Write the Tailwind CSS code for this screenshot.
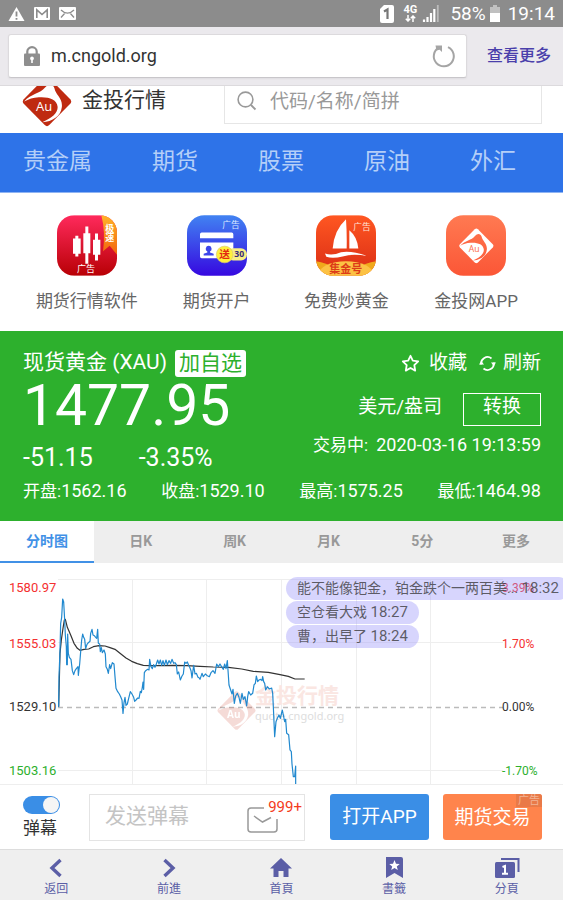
<!DOCTYPE html>
<html lang="zh-CN">
<head>
<meta charset="utf-8">
<meta name="viewport" content="width=device-width, initial-scale=1">
<title>金投行情</title>
<script src="https://cdn.jsdelivr.net/npm/@tailwindcss/browser@4"></script>
</head>
<body class="bg-white font-[Roboto,'Noto_Sans_CJK_SC',sans-serif] text-[#333] overflow-x-hidden">

<svg class="absolute h-0 w-0" aria-hidden="true">
  <defs>
    <mask id="cut" maskUnits="userSpaceOnUse" x="60" y="220" width="162" height="166">
      <rect x="60" y="220" width="162" height="166" fill="#fff"/>
      <path fill="#000" d="M70 303C92 278 120 280 135 260C145 247 160 248 164 262C168 283 190 292 187 320C184 348 158 366 126 367C158 354 174 338 174 320C172 296 146 288 116 290C98 291 84 296 70 303Z"/>
    </mask>
    <symbol id="diamond" viewBox="64 224 154 158">
      <path mask="url(#cut)" fill="currentColor" d="M134 230Q141 223 148 230L213 296Q219 303 213 310L148 376Q141 383 134 376L69 310Q63 303 69 296Z"/>
    </symbol>
  </defs>
</svg>

<!-- System status -->
<div class="flex h-[27px] items-center justify-between bg-[#8c8c8c] px-2 text-white">
  <div class="flex items-center gap-2">
    <svg class="h-4 w-[17px]" viewBox="0 0 17 16"><path fill="#fff" d="M8.500 1L16.500 15H.5Z"/><path stroke="#8c8c8c" stroke-width="1.800" d="M8.500 5.500v5M8.500 12v1.800"/></svg>
    <svg class="ml-px h-[13px] w-4" viewBox="0 0 16 13"><rect width="16" height="13" rx="1" fill="#fff"/><path fill="none" stroke="#8c8c8c" stroke-width="1.600" d="M2.800 11V2.800L8 7.500L13.200 2.800V11"/></svg>
    <svg class="ml-px h-[13px] w-[17px]" viewBox="0 0 17 13"><rect width="17" height="13" rx="1" fill="#fff"/><path fill="none" stroke="#8c8c8c" stroke-width="1.300" d="M2 3C6 7 11 7 15 3M2 10.500L6 6M15 10.500L11 6"/></svg>
  </div>
  <div class="flex items-center text-[19px] leading-none">
    <svg class="h-[18px] w-[14px]" viewBox="0 0 14 18"><path fill="#fff" d="M4 0H12Q14 0 14 2V16Q14 18 12 18H2Q0 18 0 16V4Z"/><path fill="none" stroke="#777" stroke-width="2.200" d="M4 6.500L7.500 4.500V14"/></svg>
    <span class="ml-2 flex w-4 flex-col items-center text-[11px] leading-[10px] font-bold">4G
      <svg class="h-[7px] w-[11px]" viewBox="0 0 11 7"><path fill="none" stroke="#fff" stroke-width="1.500" d="M3 0V6M.8 3.800L3 6L5.200 3.800M8 7V1M5.800 3.200L8 1L10.200 3.200"/></svg>
    </span>
    <svg class="ml-1 h-[17px] w-[17px]" viewBox="0 0 17 17"><path stroke="#fff" stroke-width="2.200" d="M2 14.500V17M5.500 12V17M9 8V17M12.300 4V17"/><path stroke="#bcbcbc" stroke-width="1.800" d="M15.800 0V17"/></svg>
    <span class="ml-[11px]">58%</span>
    <svg class="ml-1 h-[17px] w-[10px]" viewBox="0 0 10 17"><path fill="#c0c0c0" d="M3 0H7V2H10V8H0V2H3Z"/><path fill="#fff" d="M0 8H10V17H0Z"/></svg>
    <span class="ml-2">19:14</span>
  </div>
</div>

<!-- Address bar -->
<div class="flex h-[59px] items-center border-b border-[#dcdadd] bg-[#ebe9ed] pl-2 pr-3">
  <div class="flex h-[44px] flex-1 items-center rounded-[3px] border border-[#dcdadd] border-b-[#c8c6ca] bg-white pl-[15px] pr-[10px] shadow-xs">
    <svg class="h-5 w-4 shrink-0" viewBox="0 0 16 20"><path fill="none" stroke="#8e8e8e" stroke-width="2.200" d="M3.300 9V5.500a4.700 4.300 0 0 1 9.400 0V9"/><rect y="7.500" width="16" height="12.500" rx="1" fill="#8e8e8e"/><path fill="#fff" d="M8 10.500a2 2 0 0 1 .8 3.800V17H7.200V14.300A2 2 0 0 1 8 10.500Z"/></svg>
    <input type="text" aria-label="网址" value="m.cngold.org" class="ml-[11px] min-w-0 flex-1 text-[18px] leading-6 text-[#333] outline-none">
    <button aria-label="重新载入" class="shrink-0"><svg class="h-6 w-6" viewBox="0 0 24 24"><path fill="none" stroke="#a5a5a5" stroke-width="2" d="M16 3.200A10 10 0 1 1 7 3.500"/><path fill="#a5a5a5" d="M3.500 1.500H10V8L7.600 5.700L4.500 6.500Z"/></svg></button>
  </div>
  <a href="#" class="ml-[20px] text-[16px] font-medium text-[#4a3fab]">查看更多</a>
</div>

<!-- Site header -->
<header class="flex h-[46px] items-start overflow-hidden pl-[22px] pr-[21px]">
  <svg class="h-[41px] w-[50px] shrink-0" viewBox="0 0 50 41"><use href="#diamond" x="0" y="-10" width="50" height="51" class="text-[#bf2a10]"/><text x="14" y="25" font-size="13" fill="#fff" font-family="Open Sans">Au</text></svg>
  <h1 class="ml-[10px] text-[21px] leading-[28px]">金投行情</h1>
  <label class="ml-auto flex h-[38px] w-[318px] items-start border border-t-0 border-[#e6e6e6] pl-3">
    <svg class="mt-[5px] h-5 w-5 shrink-0" viewBox="0 0 20 20"><circle cx="8.500" cy="8.500" r="7.400" fill="none" stroke="#999" stroke-width="1.600"/><path stroke="#999" stroke-width="1.800" d="M14 14L18.500 18.500"/></svg>
    <input type="search" aria-label="搜索" placeholder="代码/名称/简拼" class="ml-[13px] h-[30px] min-w-0 flex-1 text-[19px] outline-none placeholder:text-[#999]">
  </label>
</header>

<nav class="mt-px flex h-[60px] items-center gap-[60px] border-b border-[#8fb4f3] bg-[#2e73e8] pl-[23px] text-[23px] whitespace-nowrap text-[#b4cff8]">
  <a href="#">贵金属</a><a href="#">期货</a><a href="#">股票</a><a href="#">原油</a><a href="#">外汇</a>
</nav>

<!-- App shortcuts -->
<section class="grid grid-cols-4 px-[22px] pt-[22px] pb-[17px] text-center text-[17px] leading-[26px] whitespace-nowrap text-[#666]">
  <a href="#" class="flex flex-col items-center gap-[12px]">
    <svg class="h-[61px] w-[60px]" viewBox="0 0 180 182">
      <defs><linearGradient id="r" x2="0" y2="1"><stop stop-color="#ff2a5c"/><stop offset="1" stop-color="#b80005"/></linearGradient><linearGradient id="o" x2="0" y2="1"><stop stop-color="#ffb42a"/><stop offset="1" stop-color="#f2640c"/></linearGradient><clipPath id="c"><rect width="180" height="182" rx="52"/></clipPath></defs>
      <g clip-path="url(#c)"><rect width="180" height="182" fill="url(#r)"/><path fill="url(#o)" d="M133 0H180V119L158 92L138 108Q146 50 133 0Z"/></g>
      <path fill="#fff" d="M48 70h7v-8h9v8h7v46h-7v8h-9v-8h-7ZM79 54h6V34h9v20h6v60h-6v32h-9v-32h-6ZM108 74h6V55h9v19h7v45h-7v17h-9v-17h-6Z"/>
      <g fill="#fff" font-family="Noto Sans CJK SC" font-size="27"><text x="145" y="50" font-weight="700">极</text><text x="145" y="79" font-weight="700">速</text><text x="60" y="172">广告</text></g>
    </svg>期货行情软件</a>
  <a href="#" class="flex flex-col items-center gap-[12px]">
    <svg class="h-[61px] w-[60px]" viewBox="0 0 180 182">
      <defs><linearGradient id="b" x2="0" y2="1"><stop stop-color="#4183f2"/><stop offset="1" stop-color="#3608e0"/></linearGradient></defs>
      <rect width="180" height="182" rx="52" fill="url(#b)"/>
      <path fill="#fff" d="M44 52H134Q139 52 139 57V69H39V57Q39 52 44 52ZM39 82H139V129H44Q39 129 39 124Z"/>
      <path fill="#3c45ea" d="M65 92a9 9 0 0 1 4 17V112L80 116V121H50V116L61 112V109A9 9 0 0 1 65 92Z"/>
      <rect x="120" y="99" width="60" height="37" rx="18" fill="#f8ef86"/>
      <circle cx="113" cy="118" r="25" fill="#fff03c" stroke="#d9c870" stroke-width="2"/>
      <text x="97" y="129" font-size="32" font-weight="700" fill="#e22a12" font-family="Noto Sans CJK SC">送</text>
      <text x="142" y="127" font-size="26" font-weight="700" fill="#3a2a78" font-family="Open Sans">30</text>
      <text x="106" y="39" font-size="26" fill="#dbe8ff" font-family="Noto Sans CJK SC">广告</text>
    </svg>期货开户</a>
  <a href="#" class="flex flex-col items-center gap-[12px]">
    <svg class="h-[61px] w-[60px]" viewBox="0 0 180 182">
      <defs><linearGradient id="s" x2="0" y2="1"><stop stop-color="#ff5722"/><stop offset="1" stop-color="#d92c14"/></linearGradient></defs>
      <g clip-path="url(#c)"><rect width="180" height="182" fill="url(#s)"/><path fill="#f0a91c" d="M0 138Q30 142 60 160V182H0ZM180 138Q150 142 120 160V182H180Z"/><ellipse cx="90" cy="180" rx="84" ry="42" fill="#fcc244"/></g>
      <path fill="#fff" d="M90 12Q93 55 92 100H50Q54 45 90 12ZM100 45Q124 65 127 100H100ZM27 115Q50 122 75 111Q105 105 152 122Q108 115 80 124Q50 131 31 125Z"/>
      <g font-family="Noto Sans CJK SC"><text x="40" y="174" font-size="33" font-weight="700" fill="#dc3c18">集金号</text><text x="112" y="44" font-size="26" fill="#ffe3d8">广告</text></g>
    </svg>免费炒黄金</a>
  <a href="#" class="flex flex-col items-center gap-[12px]">
    <svg class="h-[61px] w-[60px]" viewBox="0 0 180 182">
      <defs><linearGradient id="q" x2="0" y2="1"><stop stop-color="#ff7a52"/><stop offset="1" stop-color="#fb5636"/></linearGradient></defs>
      <rect width="180" height="182" rx="52" fill="url(#q)"/><use href="#diamond" x="38" y="38" width="106" height="108" class="text-white"/><text x="68" y="111" font-size="26" fill="#fb6a46" font-family="Open Sans">Au</text>
    </svg>金投网APP</a>
</section>

<!-- Quote -->
<section class="bg-[#2db02d] pt-[16px] pb-[16px] pl-[23px] pr-[22px] text-white whitespace-nowrap">
  <div class="flex justify-between">
    <div>
      <div class="flex items-center gap-[8px]">
        <h2 class="text-[21px] leading-[30px]">现货黄金 (XAU)</h2>
        <button class="mt-[2px] h-[27px] rounded-[3px] bg-white px-[4px] text-[21px] leading-[22px] text-[#2db02d]">加自选</button>
      </div>
      <div class="text-[57px] leading-[58px]">1477.95</div>
      <div class="mt-[7px] flex gap-[46px] text-[25px] leading-[32px]"><span>-51.15</span><span>-3.35%</span></div>
    </div>
    <div class="flex flex-col items-end">
      <div class="mt-px flex items-center text-[19px] leading-[30px]">
        <button class="flex items-center gap-[9px]"><svg class="h-[19px] w-[19px]" viewBox="0 0 19 19"><path fill="none" stroke="#fff" stroke-width="1.800" stroke-linejoin="round" d="M9.500 1.800L11.800 6.700L17.200 7.400L13.300 11.200L14.200 16.600L9.500 14L4.800 16.600L5.700 11.200L1.800 7.400L7.200 6.700Z"/></svg>收藏</button>
        <button class="ml-[12px] flex items-center gap-[7px]"><svg class="h-[17px] w-[17px]" viewBox="0 0 17 17"><path fill="none" stroke="#fff" stroke-width="1.800" d="M2.300 9.500A6.300 6.300 0 0 1 12.500 3.500M4.500 13.500A6.300 6.300 0 0 0 14.700 7.500"/><path fill="#fff" d="M0 9.500L2.300 6L5 9.500ZM17 7.500L14.700 11L12 7.500Z"/></svg>刷新</button>
      </div>
      <div class="mt-[15px] flex items-center gap-[21px] text-[19px]"><span class="pb-[4px]">美元/盎司</span><button class="h-[33px] w-[78px] border border-white pb-[6px] leading-[25px]">转换</button></div>
      <div class="mt-[5px] text-[17px] leading-[28px]">交易中: <time class="ml-[4px] text-[18px]">2020-03-16 19:13:59</time></div>
    </div>
  </div>
  <div class="mt-[3px] flex justify-between text-[17px] leading-[28px]">
    <span>开盘:<span class="text-[18px]">1562.16</span></span><span>收盘:<span class="text-[18px]">1529.10</span></span><span>最高:<span class="text-[18px]">1575.25</span></span><span>最低:<span class="text-[18px]">1464.98</span></span>
  </div>
</section>

<nav class="grid h-[42px] grid-cols-6 bg-[#eee] text-[14px] leading-[40px] font-bold text-[#999]">
  <button class="border-b-2 border-[#4191e6] bg-white text-[#4191e6]">分时图</button><button class="pb-[2px]">日K</button><button class="pb-[2px]">周K</button><button class="pb-[2px]">月K</button><button class="pb-[2px]">5分</button><button class="pb-[2px]">更多</button>
</nav>

<!-- Intraday chart -->
<section class="relative overflow-hidden">
  <svg class="block w-full" viewBox="0 0 563 222" role="img" aria-label="分时图">
    <path fill="none" stroke="#eee" d="M58 16.500H503M58 79.500H503M58 207.500H503M0 221.500H563M132.500 16V221M206.500 16V221M281.500 16V221M356.500 16V221M430.500 16V221"/>
    <path stroke="#bbb" stroke-width="1.300" stroke-dasharray="5 4" d="M58 144.500H503"/>
    <g transform="translate(217 127)" opacity=".17"><use href="#diamond" width="39" height="41" class="text-[#c8301a]"/><text x="10" y="28" font-size="10" font-weight="700" fill="#fff" font-family="Open Sans">Au</text></g>
    <text x="255" y="140" font-size="21" font-weight="700" fill="#fae6e2" font-family="Noto Sans CJK SC">金投行情</text>
    <text x="255" y="157" font-size="11" fill="#ddd" font-family="Noto Sans">quote.cngold.org</text>
    <g font-size="13" font-family="Roboto">
      <g fill="#f43030"><text x="9" y="29">1580.97</text><text x="9" y="85">1555.03</text><text x="502" y="29" font-size="12">3.39%</text><text x="502" y="85" font-size="12">1.70%</text></g>
      <g fill="#333"><text x="9" y="148">1529.10</text><text x="502" y="148" font-size="12">0.00%</text></g>
      <g fill="#2db02d"><text x="9" y="212">1503.16</text><text x="502" y="212" font-size="12">-1.70%</text></g>
    </g>
    <g transform="translate(0 -43) scale(.33333)" fill="none" stroke-linejoin="round">
      <polyline stroke="#333" stroke-width="3.600" points="176,560 180,400 184,360 189,325 193,300 196,298 202,322 212,345 222,370 232,385 240,391 252,388 266,387 280,380 297,377 315,378 330,383 345,388 360,400 378,414 395,424 412,431 430,436 450,437 480,437 520,436 560,437 600,439 640,441 685,442 725,447 760,454 805,457 840,464 865,469 885,477 914,477"/>
      <polyline stroke="#2189cf" stroke-width="3.600" points="176,560 177,470 180,390 182,310 185,292 188,237 191,246 194,300 196,345 199,380 200,434 202,434 203,342 205,400 208,412 213,418 217,452 221,464 225,452 229,446 234,440 235,466 239,432 242,395 245,360 248,342 251,352 254,358 257,386 261,373 265,368 270,364 272,340 276,328 279,345 283,347 287,352 290,355 293,328 295,370 299,372 301,395 304,383 307,398 312,390 316,402 318,440 322,448 325,460 329,434 332,446 337,428 342,432 345,470 348,505 353,515 358,522 362,530 366,540 369,580 372,548 375,532 378,556 382,552 386,535 391,515 396,522 401,532 404,544 408,540 413,534 417,535 421,514 424,518 427,502 429,486 431,508 433,458 437,452 443,448 447,450 449,418 453,440 457,446 461,434 465,442 469,432 473,420 477,432 481,420 485,436 489,422 493,436 498,420 502,434 507,422 512,430 516,418 521,430 525,428 529,434 532,462 536,456 541,480 546,468 550,462 554,426 558,430 562,426 566,436 570,444 573,452 576,474 581,436 585,462 589,460 594,472 598,474 600,478 606,460 610,470 616,462 622,467 628,470 633,458 639,452 645,460 650,432 655,440 660,432 666,442 670,448 674,432 678,446 682,422 685,465 687,495 692,510 696,522 699,508 703,550 707,528 712,520 717,532 721,550 726,520 730,538 735,530 740,558 743,530 746,515 752,525 758,520 762,495 766,490 769,468 773,485 777,480 782,478 786,482 788,470 791,485 794,490 797,510 802,500 808,507 815,504 818,520 820,560 824,650 828,605 832,595 837,585 841,595 847,570 850,585 854,605 857,598 860,640 866,644 870,690 874,695 876,732 880,770 884,770 887,738 887,792"/>
    </g>
  </svg>
  <ul class="absolute top-[14px] left-[286px] flex flex-col items-start gap-px text-[14px] leading-[23px] whitespace-nowrap text-[#333]/75">
    <li class="rounded-full bg-[#9b96fa]/40 px-[11px]">能不能像钯金，铂金跌个一两百美... <time class="text-[15px]">18:32</time></li>
    <li class="rounded-full bg-[#9b96fa]/40 px-[11px]">空仓看大戏 <time class="text-[15px]">18:27</time></li>
    <li class="rounded-full bg-[#9b96fa]/40 px-[11px]">曹，出早了 <time class="text-[15px]">18:24</time></li>
  </ul>
</section>

<!-- Comment bar -->
<section class="flex h-[64px] items-center pl-[23px] pr-[21px] whitespace-nowrap">
  <label class="flex w-[38px] flex-col pt-[3px] text-[17px] leading-[28px]">
    <input type="checkbox" checked class="peer sr-only">
    <span class="flex h-[18px] w-[37px] items-center justify-end rounded-full bg-[#3a8ee6] px-px"><span class="h-4 w-4 rounded-full bg-[#f5f5f5]"></span></span>
    弹幕
  </label>
  <div class="mt-px ml-[28px] flex h-[47px] min-w-0 flex-1 border border-[#e4e4e4] pl-[15px]">
    <input type="text" aria-label="发送弹幕" placeholder="发送弹幕" class="min-w-0 flex-1 pb-[2px] text-[21px] outline-none placeholder:text-[#c4c4c4]">
    <button aria-label="消息" class="relative w-[57px] shrink-0">
      <svg class="mt-[4px] h-[26px] w-[31px]" viewBox="0 0 31 26"><path fill="none" stroke="#999" stroke-width="1.500" d="M17 1H4Q1 1 1 4V22Q1 25 4 25H27Q30 25 30 22V12M7 9L15.500 15L24 10.500"/></svg>
      <span class="absolute top-[3px] right-[2px] text-[15px] leading-[18px] text-[#f43a20]">999+</span>
    </button>
  </div>
  <button class="ml-[25px] h-[46px] w-[99px] rounded-[3px] bg-[#3a8ee6] text-[19px] text-white">打开APP</button>
  <button class="relative ml-[14px] h-[46px] w-[99px] overflow-hidden rounded-[3px] bg-[#ff844c] pt-[2px] text-[19px] text-white">期货交易<span class="absolute top-0 right-0 bg-[#e97a48] px-[2px] text-[11px] leading-[13px] text-[#f2b394]">广告</span></button>
</section>

<!-- Browser toolbar -->
<nav class="grid h-[51px] grid-cols-5 border-t border-[#ddd] bg-[#efefef] pt-[7px] text-[12px] leading-[20px] text-[#5b5ea6]">
  <a href="#" class="flex flex-col items-center"><svg class="h-[22px] w-[26px]" viewBox="0 0 26 22"><path fill="none" stroke="#5b5ea6" stroke-width="3.400" d="M17.500 3L9 11L17.500 19"/></svg>返回</a>
  <a href="#" class="flex flex-col items-center"><svg class="h-[22px] w-[26px]" viewBox="0 0 26 22"><path fill="none" stroke="#5b5ea6" stroke-width="3.400" d="M8.500 3L17 11L8.500 19"/></svg>前進</a>
  <a href="#" class="flex flex-col items-center"><svg class="h-[22px] w-[26px]" viewBox="0 0 26 22"><path fill="#5b5ea6" d="M13 1L24 11.500H20.500V20H15.500V14H10.500V20H5.500V11.500H2Z"/></svg>首頁</a>
  <a href="#" class="flex flex-col items-center"><svg class="h-[22px] w-[26px]" viewBox="0 0 26 22"><path fill="#5b5ea6" d="M5 0H20Q22 0 22 2V21L13.500 16L5 21Z"/><path fill="#fff" d="M13.500 3L15 6.700L18.700 7L15.800 9.400L16.800 13L13.500 11L10.200 13L11.200 9.400L8.300 7L12 6.700Z"/></svg>書籤</a>
  <a href="#" class="flex flex-col items-center"><svg class="h-[22px] w-[26px]" viewBox="0 0 26 22"><rect x="1" y="5" width="20" height="16" rx="1.500" fill="#5b5ea6"/><path fill="none" stroke="#5b5ea6" stroke-width="2" d="M7 2H24.500V15"/><path fill="none" stroke="#fff" stroke-width="2" d="M8.500 10L11 9V16.500M8 16.800H14"/></svg>分頁</a>
</nav>
</body>
</html>
